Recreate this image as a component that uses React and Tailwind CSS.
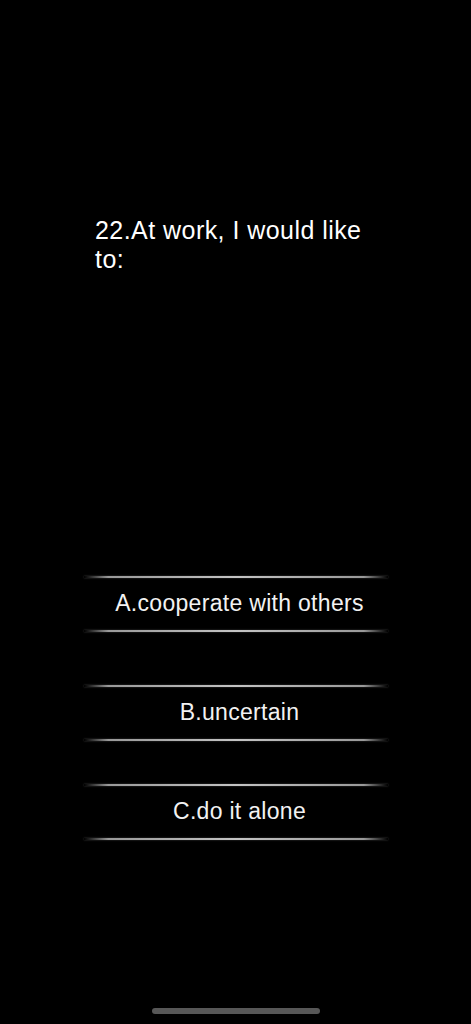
import React from "react";

const options = [
  { label: "A.cooperate with others", gap: "mt-[302px]" },
  { label: "B.uncertain", gap: "mt-[53px]" },
  { label: "C.do it alone", gap: "mt-[43px]" },
];

function Rule() {
  return (
    <div className="h-[2px] w-full bg-[linear-gradient(to_right,rgba(180,180,180,0)_0%,rgba(180,180,180,0.85)_8%,#c4c4c4_50%,rgba(180,180,180,0.85)_92%,rgba(180,180,180,0)_100%)] shadow-[0_0_2px_rgba(200,200,200,0.35)]" />
  );
}

export default function App() {
  return (
    <div
      className="flex h-[1024px] w-[471px] flex-col overflow-hidden bg-black text-white"
      style={{ fontFamily: '"Liberation Sans", Arial, sans-serif' }}
    >
      <div className="pl-[95px] pt-[216px]">
        <p className="w-[285px] text-[25px] leading-[29px] tracking-[0.45px]">
          22.At work, I would like to:
        </p>
      </div>

      {options.map((o) => (
        <button
          key={o.label}
          type="button"
          className={`${o.gap} ml-[84px] flex w-[304px] flex-col`}
        >
          <Rule />
          <span className="flex h-[52px] items-center justify-center pb-[1px] pl-[7px] text-[23px] tracking-[0.3px] text-[#f2f2f2]">
            {o.label}
          </span>
          <Rule />
        </button>
      ))}

      <div className="mx-auto mb-[10px] mt-auto h-[6px] w-[168px] rounded-full bg-[#575757]" />
    </div>
  );
}
